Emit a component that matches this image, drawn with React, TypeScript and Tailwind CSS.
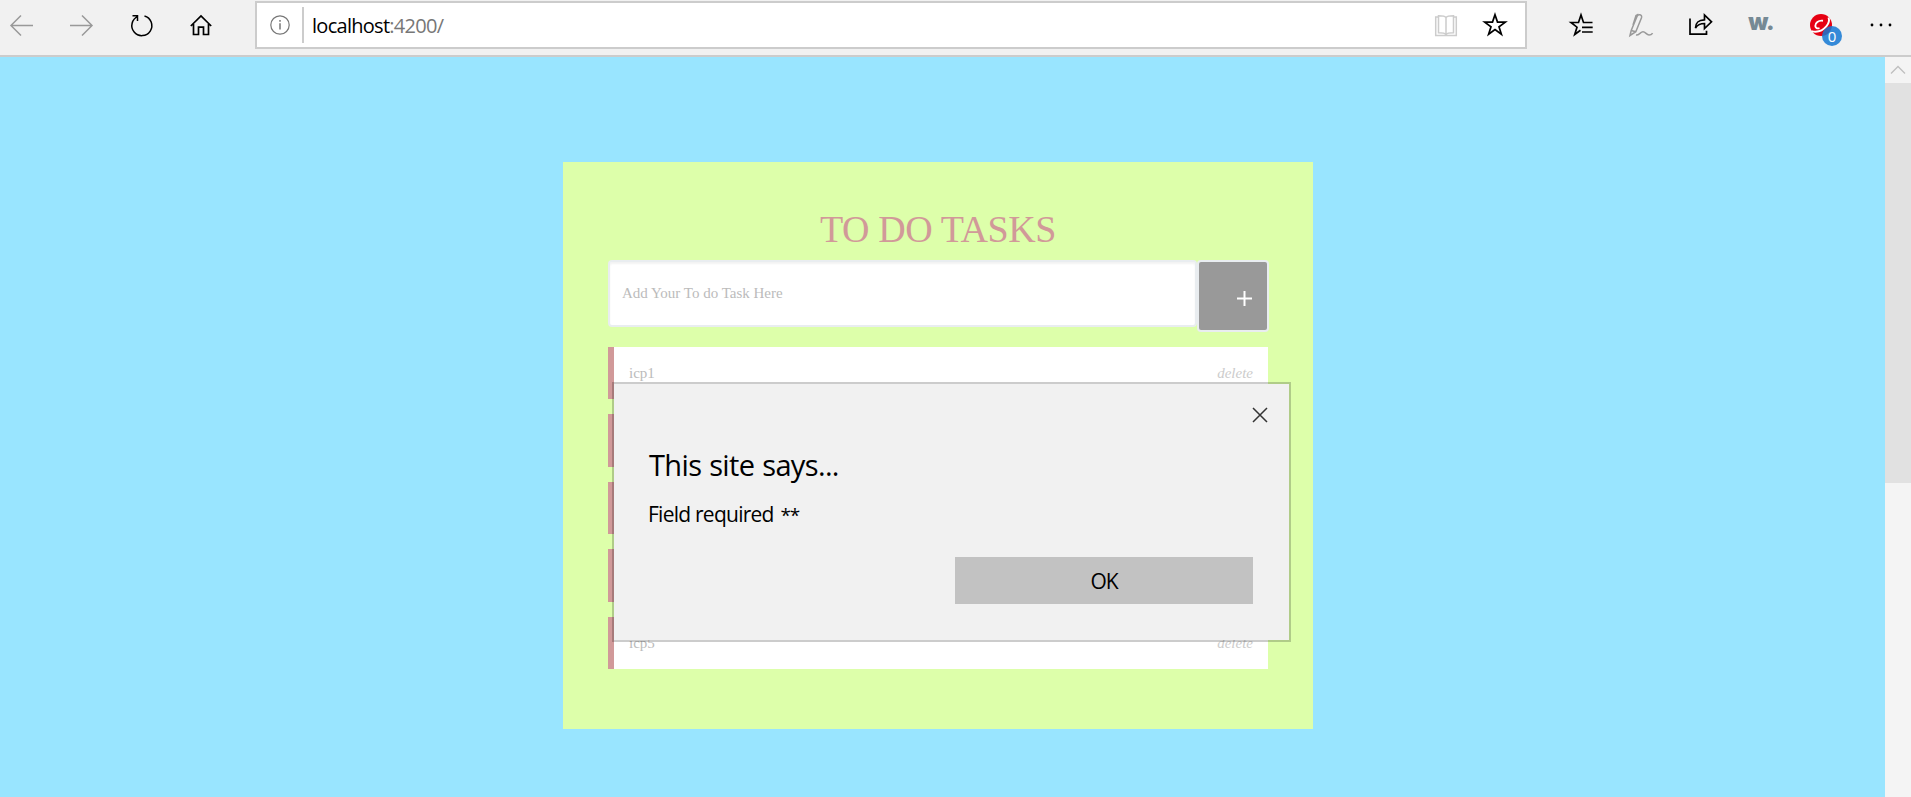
import type { ReactNode } from "react";

const tasks = ["icp1", "", "", "", "icp5"];

function Icon({ children, className = "" }: { children: ReactNode; className?: string }) {
  return (
    <svg
      width="30"
      height="30"
      viewBox="0 0 30 30"
      fill="none"
      stroke="currentColor"
      strokeWidth="1.5"
      className={"shrink-0 " + className}
    >
      {children}
    </svg>
  );
}

function ToolButton({ label, children }: { label: string; children: ReactNode }) {
  return (
    <button aria-label={label} className="flex h-[50px] w-[60px] shrink-0 items-center justify-center text-black">
      {children}
    </button>
  );
}

function Toolbar() {
  return (
    <header className="flex h-[57px] shrink-0 items-start overflow-hidden border-b-2 border-[#cccccc] bg-[#f1f1f1]">
      <nav className="-ml-2 flex w-[263px] shrink-0">
        <ToolButton label="Back">
          <Icon className="text-[#999999]">
            <path d="M26 15.500H4M14 5.500L4 15.500l10 10" />
          </Icon>
        </ToolButton>
        <ToolButton label="Forward">
          <Icon className="text-[#999999]">
            <path d="M3 15.500h22M15 5.500l10 10-10 10" />
          </Icon>
        </ToolButton>
        <ToolButton label="Refresh">
          <Icon>
            <path d="M17.500 6a10 10 0 1 1-6.500.4M5.500 5.800h5V11" />
          </Icon>
        </ToolButton>
        <ToolButton label="Home">
          <Icon>
            <path d="M3.800 16L14 5.900 24.200 16M6.500 14v10.500h5v-7.300h5v7.300h5V14" strokeWidth="1.700" />
          </Icon>
        </ToolButton>
      </nav>

      <div className="mt-px flex h-12 w-[1272px] shrink-0 items-center border-2 border-[#cccccc] bg-white">
        <svg width="20" height="20" viewBox="0 0 20 20" fill="none" stroke="#777777" className="ml-[13px] shrink-0" strokeWidth="1.200">
          <circle cx="10" cy="10" r="9.200" />
          <path d="M10 8.300v6.200M10 5v1.800" strokeWidth="1.500" />
        </svg>
        <span className="ml-3 h-9 w-0.5 bg-[#cccccc]" />
        <span className="ml-2 pt-px font-['Open_Sans','Noto_Sans',sans-serif] text-[20px] leading-none tracking-[-0.72px] text-[#777777]">
          <span className="text-black">localhost</span>:4200/
        </span>
        <span className="ml-auto flex items-center gap-[18px] pr-[15px]">
          <Icon className="text-[#cccccc]">
            <path d="M6 7H3.700v18.500h20.600V7H22M14 7.500c-1-1.500-3-1.800-7.500-1.800v17c4.500 0 6.500.3 7.500 1.800 1-1.500 3-1.800 7.500-1.800v-17c-4.500 0-6.500.3-7.500 1.800v17" />
          </Icon>
          <Icon>
            <path
              d="M15 4.700l2.500 7.400h7.800l-6.300 4.600 2.400 7.500L15 19.600l-6.400 4.600L11 16.700l-6.300-4.600h7.800z"
              strokeWidth="1.700"
            />
          </Icon>
        </span>
      </div>

      <nav className="ml-6 flex shrink-0">
        <ToolButton label="Favorites">
          <Icon>
            <path
              d="M26.500 12.500h-9L15 5l-2.500 7.500H5l6 4.700-2.300 7.300 5.800-4.200M16 17.300h10.700M16 22h10.700"
              strokeWidth="1.700"
            />
          </Icon>
        </ToolButton>
        <ToolButton label="Add notes">
          <Icon className="text-[#999999]">
            <path d="M4 25.500l1.200-5L11 6.500c1-2.700 5.500-2.500 4.500 1.200L9.800 21.700zM7 15l3-9.500 2.500-1.200M5.200 20.500l4.600 1.200M10 25c3 .5 4.500-3.200 7-3.200s3.500 3.200 6 3.200 3-1 3.500-1.800" />
          </Icon>
        </ToolButton>
        <ToolButton label="Share">
          <Icon>
            <path
              d="M4 8.500v15.700h16.500v-3.500M9.500 18c.2-5.500 2.500-8 9-8.200V5l7 6.800-7 6.700v-5c-5 0-7.500 2-9 4.500z"
              strokeWidth="1.700"
            />
          </Icon>
        </ToolButton>
        <ToolButton label="Extension">
          <span className="pb-1.5 font-['Inter',sans-serif] text-[23px] leading-none font-black tracking-[-0.8px] text-[#768a95]">
            w.
          </span>
        </ToolButton>
        <ToolButton label="Security">
          <span className="relative block">
            <svg width="22" height="22" viewBox="0 0 22 22" className="block">
              <circle cx="11" cy="11" r="11" fill="#e60012" />
              <path
                d="M1.500 17.200c6 1.500 11.500-.7 15-5 2.200-2.700 3-6 2-8.700M13 6.800C8.500 6 5 9 5.300 12c.2 2 2 2.800 4.200 2.200"
                stroke="#ffffff"
                strokeWidth="1.900"
                fill="none"
              />
            </svg>
            <span className="absolute top-[12px] left-[12px] flex size-5 items-center justify-center rounded-full bg-[#1478d4]/85 font-['Open_Sans',sans-serif] text-[15px] leading-none text-white">
              0
            </span>
          </span>
        </ToolButton>
        <ToolButton label="More">
          <Icon>
            <g fill="currentColor" stroke="none">
              <circle cx="6" cy="15" r="1.400" />
              <circle cx="15" cy="15" r="1.400" />
              <circle cx="24" cy="15" r="1.400" />
            </g>
          </Icon>
        </ToolButton>
      </nav>
    </header>
  );
}

function TodoPanel() {
  return (
    <section className="h-[567px] w-[750px] bg-[#ddffaa] px-[45px] pt-[45px] font-['Liberation_Serif',serif]">
      <h1 className="h-[53px] text-center text-[38px] leading-[45px] tracking-[-0.4px] text-[#d19999]">TO DO TASKS</h1>
      <form className="flex h-[86.9px] items-start">
        <input
          className="h-[67px] w-[589px] shrink-0 rounded-[4px] border-2 border-[#e9edf0] bg-white px-3 pb-px text-[15px] text-[#bbbbbb] shadow-[inset_0_2px_2px_rgba(0,0,0,0.05)] placeholder:text-[#bbbbbb]"
          placeholder="Add Your To do Task Here"
        />
        <button
          type="button"
          className="flex h-[72px] w-[72px] shrink-0 items-center justify-end rounded-[4px] border-2 border-[#e9edf0] bg-[#999999] pr-[15.5px] pt-1 text-white"
          aria-label="Add"
        >
          <svg width="15" height="15" viewBox="0 0 15 15" stroke="currentColor" strokeWidth="2">
            <path d="M7.500 0v15M0 7.500h15" />
          </svg>
        </button>
      </form>
      <ul className="flex flex-col gap-[15px]">
        {tasks.map((task, index) => (
          <li
            key={index}
            className="flex h-[52.5px] w-[660px] items-center justify-between border-l-[6px] border-[#d19999] bg-white pr-[15px] pl-[15px] text-[15px] text-[#bbbbbb]"
          >
            {task && (
              <>
                <span>{task}</span>
                <em className="text-[#cccccc]">delete</em>
              </>
            )}
          </li>
        ))}
      </ul>
    </section>
  );
}

function Alert() {
  return (
    <div
      role="alertdialog"
      className="absolute top-[382px] left-[612px] flex h-[260px] w-[679px] flex-col border-2 border-black/20 bg-[#f1f1f1] bg-clip-padding px-[35px] font-['Open_Sans','Noto_Sans',sans-serif] text-black"
    >
      <button aria-label="Close" className="mt-[22.5px] -mr-[13.5px] self-end">
        <svg width="16" height="16" viewBox="0 0 16 16" stroke="#333333" strokeWidth="1.500" className="block">
          <path d="M1 1l14 14M15 1L1 15" />
        </svg>
      </button>
      <h2 className="mt-[22.5px] text-[29px] leading-10 tracking-[-0.65px] [word-spacing:1px]">This site says...</h2>
      <p className="mt-[15px] -ml-px text-[21px] leading-7 tracking-[-0.75px]">
        Field required <span className="ml-[2px] text-[19px] leading-none tracking-[-1.2px]">**</span>
      </p>
      <button className="mt-[29px] mr-px h-[47px] w-[298px] self-end bg-[#c2c2c2] pt-0.5 text-[21px] leading-none tracking-[-1px]">
        OK
      </button>
    </div>
  );
}

function Scrollbar() {
  return (
    <aside className="flex w-[26px] shrink-0 flex-col bg-[#f4f4f4]">
      <div className="flex h-[26px] items-center justify-center">
        <svg width="16" height="10" viewBox="0 0 16 10" fill="none" stroke="#bfbfbf" strokeWidth="1.300">
          <path d="M1 8.500l7-7 7 7" />
        </svg>
      </div>
      <div className="h-[400px] bg-[#e1e1e1]" />
    </aside>
  );
}

export default function App() {
  return (
    <div className="relative flex h-[797px] w-[1911px] flex-col overflow-hidden">
      <Toolbar />
      <div className="flex min-h-0 flex-1">
        <main className="flex-1 bg-[#99e5ff] pt-[105px] pl-[563px]">
          <TodoPanel />
        </main>
        <Scrollbar />
      </div>
      <Alert />
    </div>
  );
}
